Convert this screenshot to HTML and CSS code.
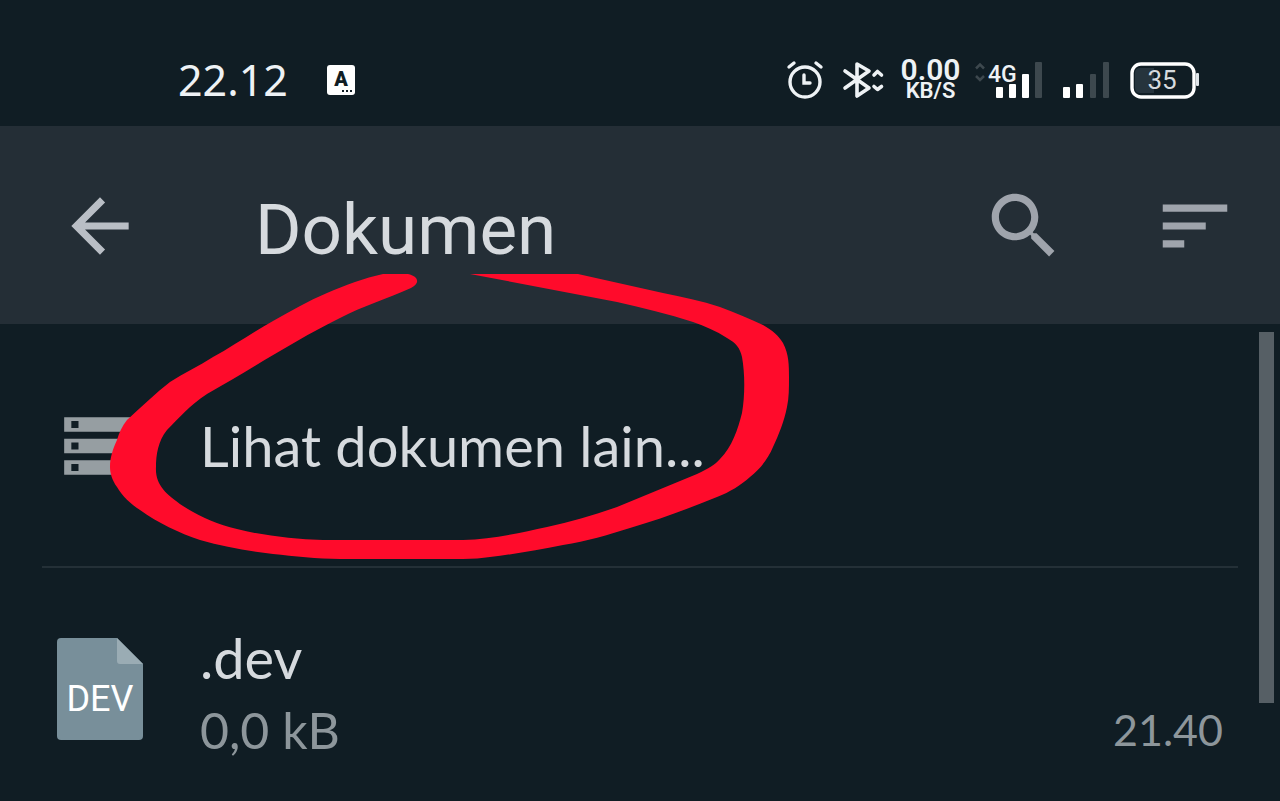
FILE: index.html
```
<!DOCTYPE html>
<html lang="id">
<head>
    <meta charset="UTF-8">
    <meta name="viewport" content="width=device-width, initial-scale=1.0">
    <title>Dokumen</title>
    <link rel="stylesheet" href="styles.css">
</head>
<body>
    <div class="statusbar">
        <span class="clock">22.12</span>
        <svg class="app-icon" width="28" height="30" viewBox="0 0 28 30">
            <rect width="28" height="30" rx="3" fill="#fff"/>
            <text x="14" y="21" text-anchor="middle" class="app-letter">A</text>
            <path d="M15 26h2M19 26h2M23 26h2" stroke="#101d24" stroke-width="2"/>
        </svg>
        <div class="status-icons">
            <!-- alarm -->
            <svg width="42" height="40" viewBox="0 0 42 40" fill="none" stroke="#eef2f5" stroke-width="3.400" stroke-linecap="round">
                <circle cx="20" cy="22" r="15"/>
                <path d="M19 15v8h6M4 7l5-4M31 3l5 4"/>
            </svg>
            <!-- bluetooth -->
            <svg width="45" height="40" viewBox="0 0 45 40" fill="none" stroke="#eef2f5" stroke-width="3.600" stroke-linecap="round" stroke-linejoin="round">
                <path d="M4 11l24 17-12 8V4l12 7L4 28"/>
                <path d="M33 15l3.500-3.500 4 3.500M33 26.500l3.500 3 4-3"/>
            </svg>
            <div class="speed">
                <span class="speed-value">0.00</span>
                <span class="speed-unit">KB/S</span>
            </div>
            <!-- sim 1 -->
            <svg width="68" height="40" viewBox="0 0 68 40">
                <path d="M1 8.500l4-4 4 4M1 16l4 4 4-4" fill="none" stroke="#3d484e" stroke-width="2.500"/>
                <g fill="#fff">
                    <rect x="21" y="27" width="7" height="11" rx="1"/>
                    <rect x="34" y="24" width="7" height="14" rx="1"/>
                    <rect x="47" y="14" width="7" height="24" rx="1"/>
                </g>
                <rect x="60" y="2" width="7" height="36" rx="1" fill="#3d484e"/>
                <text x="13" y="22" class="net-type">4G</text>
            </svg>
            <!-- sim 2 -->
            <svg width="56" height="40" viewBox="0 0 56 40">
                <rect x="6" y="27" width="7" height="11" rx="1" fill="#fff"/>
                <rect x="19" y="24" width="7" height="14" rx="1" fill="#fff"/>
                <rect x="33" y="14" width="6" height="24" rx="1" fill="#3d484e"/>
                <rect x="46" y="2" width="6" height="36" rx="1" fill="#3d484e"/>
            </svg>
            <!-- battery -->
            <svg width="74" height="40" viewBox="0 0 74 40">
                <rect x="5" y="4" width="62" height="33" rx="9" fill="none" stroke="#fff" stroke-width="3.400"/>
                <path d="M13 8h14v25H13q-5 0-5-5V13q0-5 5-5z" fill="#26343d"/>
                <rect x="69" y="13" width="3" height="13" rx="1" fill="#dfe4e8"/>
                <text x="35" y="29" text-anchor="middle" class="battery-level">35</text>
            </svg>
        </div>
    </div>

    <header class="toolbar">
        <button class="icon-btn back" aria-label="Kembali">
            <svg viewBox="0 0 24 24"><path d="M20 11H7.830l5.590-5.590L12 4l-8 8 8 8 1.410-1.410L7.830 13H20v-2z"/></svg>
        </button>
        <h1>Dokumen</h1>
        <button class="icon-btn" aria-label="Cari">
            <svg viewBox="0 0 24 24"><path d="M15.500 14h-.790l-.280-.270C15.410 12.590 16 11.110 16 9.500 16 5.910 13.090 3 9.500 3S3 5.910 3 9.500 5.910 16 9.500 16c1.610 0 3.090-.590 4.230-1.570l.270.280v.790l5 4.990L20.490 19l-4.990-5zm-6 0C7.010 14 5 11.990 5 9.500S7.010 5 9.500 5 14 7.010 14 9.500 11.990 14 9.500 14z"/></svg>
        </button>
        <button class="icon-btn" aria-label="Urutkan">
            <svg viewBox="0 0 24 24"><path d="M3 18h6v-2H3v2zM3 6v2h18V6H3zm0 7h12v-2H3v2z"/></svg>
        </button>
    </header>

    <main class="list">
        <a href="#" class="row browse">
            <svg class="row-icon" width="86" height="86" viewBox="0 0 24 24" fill="#969ea2"><path d="M2 20h20v-4H2v4zm2-3h2v2H4v-2zM2 4v4h20V4H2zm4 3H4V5h2v2zm-4 7h20v-4H2v4zm2-3h2v2H4v-2z"/></svg>
            <span class="name">Lihat dokumen lain...</span>
        </a>
        <a href="#" class="row file">
            <svg class="row-icon" width="86" height="102" viewBox="0 0 86 102">
                <path d="M4 0h56l26 26v72q0 4-4 4H4q-4 0-4-4V4q0-4 4-4z" fill="#788f9a"/>
                <path d="M60 0l26 26H63q-3 0-3-3z" fill="#9aacb4"/>
                <text x="43" y="73" text-anchor="middle" class="file-type">DEV</text>
            </svg>
            <span class="file-info">
                <span class="name">.dev</span>
                <span class="size">0,0 kB</span>
            </span>
            <span class="time">21.40</span>
        </a>
        <div class="scrollbar"></div>
    </main>

    <!-- red marker around the first row -->
    <svg class="marker" width="680" height="286" viewBox="110 274 680 286">
        <path fill="#ff0b2b" d="M383 274H408C418 276 421 283 411 288C386 299 363 306 340 318C295 340 250 370 207 394C190 405 178 419 167 430C158 441 156 455 156 467C155 485 166 494 183 506C200 517 217 524 237 529C265 536 294 539 323 540H463C492 539 520 533 547 527C571 522 594 515 617 507L697 474C709 468 715 465 720 459C732 447 738 429 742 413C745 395 745 374 742 357C740 348 736 343 727 338C716 331 705 326 693 322C668 314 643 308 617 302L470 274H578L663 293C682 297 702 301 720 307C736 313 750 319 763 325C772 330 779 336 783 343C789 354 789 366 789 377C789 388 789 398 787 407C784 422 779 434 773 447C768 459 760 469 750 477C741 485 730 492 717 497C690 508 661 519 630 528C608 535 587 541 563 545C538 550 515 554 490 557C482 558 473 559 463 559H340C317 559 294 556 273 554C248 551 224 547 200 540C179 533 158 523 140 510C131 504 122 496 117 487C112 480 110 473 110 467C110 457 113 449 117 440C119 433 122 426 127 420C142 406 156 393 170 382C184 373 199 366 213 357C233 346 253 332 273 321C291 311 308 301 327 293C346 285 364 278 383 274Z"/>
    </svg>
</body>
</html>
```

FILE: styles.css
```
* {
    box-sizing: border-box;
}
body {
    position: relative;
    margin: 0;
    min-height: 100vh;
    background: #101d24;
    color: #d6dade;
    font-family: Lato, "Open Sans", sans-serif;
}
svg {
    display: block;
    flex-shrink: 0;
}

/* status bar */
.statusbar {
    display: flex;
    align-items: center;
    height: 126px;
    padding: 34px 79px 0 178px;
    color: #eef2f5;
    font-family: "Noto Sans", sans-serif;
}
.clock {
    font-size: 43px;
    line-height: 44px;
}
.app-icon {
    margin-left: 39px;
}
.app-letter {
    font: 900 20px Roboto, sans-serif;
    fill: #101d24;
}
.status-icons {
    display: flex;
    align-items: center;
    gap: 14px;
    margin-left: auto;
}
.speed {
    display: flex;
    flex-direction: column;
    align-items: center;
    width: 61px;
    font-family: Roboto, sans-serif;
}
.speed-value {
    font-size: 30px;
    font-weight: 600;
    line-height: 22px;
}
.speed-unit {
    font-size: 22px;
    font-weight: 600;
    line-height: 20px;
}
.net-type {
    font: 500 23px Roboto, sans-serif;
    fill: #eef2f5;
}
.battery-level {
    font: 26px Roboto, sans-serif;
    fill: #d6dade;
}

/* toolbar */
.toolbar {
    display: flex;
    align-items: center;
    height: 198px;
    padding: 2px 42px 0 57px;
    background: #242e36;
}
.toolbar h1 {
    flex: 1;
    margin: 0 0 0 112px;
    padding-top: 8px;
    font: 400 71px/84px Roboto, sans-serif;
}
.icon-btn {
    width: 86px;
    height: 86px;
    padding: 0;
    border: none;
    background: none;
    fill: #9fa4ac;
    cursor: pointer;
}
.icon-btn + .icon-btn {
    margin-left: 85px;
}
.back {
    fill: #b9bec5;
}

/* file list */
.list {
    position: relative;
}
.row {
    display: flex;
    align-items: center;
    margin: 0 42px;
    padding: 0 15px;
    color: inherit;
    text-decoration: none;
}
.row-icon {
    margin-right: 57px;
}
.browse {
    height: 244px;
    padding-top: 2px;
    border-bottom: 2px solid #243037;
}
.file {
    align-items: flex-start;
    padding-top: 54px;
}
.file .row-icon {
    margin-top: 16px;
}
.name {
    font-size: 56px;
    line-height: 72px;
}
.file-info {
    display: flex;
    flex-direction: column;
}
.size,
.time {
    color: #8d969b;
    font-size: 50px;
    line-height: 72px;
}
.time {
    align-self: flex-end;
    margin-left: auto;
    font-size: 43px;
}
.file-type {
    font: 36px Roboto, sans-serif;
    fill: #fff;
}
.scrollbar {
    position: absolute;
    top: 8px;
    right: 6px;
    width: 15px;
    height: 371px;
    background: #565f65;
}

.marker {
    position: absolute;
    top: 274px;
    left: 110px;
    pointer-events: none;
}
```
